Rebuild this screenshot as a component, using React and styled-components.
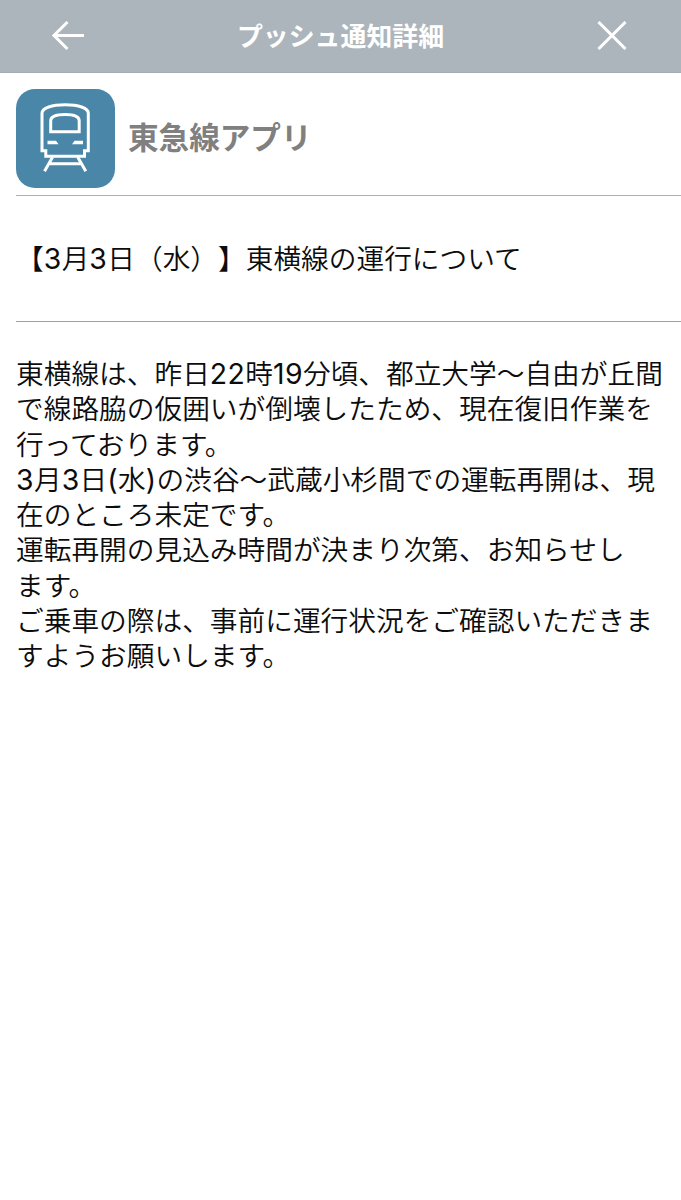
import React from "react";
import styled, { createGlobalStyle } from "styled-components";

const GlobalStyle = createGlobalStyle`
  * {
    box-sizing: border-box;
  }

  body {
    margin: 0;
    background: #fff;
    color: #0c0c0c;
    font-family: Inter, "Noto Sans CJK JP", sans-serif;
    text-spacing-trim: space-all;
    overflow-x: hidden;
  }
`;

const Page = styled.div`
  min-height: 1200px;
  background: #fff;
`;

const Header = styled.header`
  display: grid;
  grid-template-columns: 136px 1fr 138px;
  align-items: center;
  height: 73px;
  background: #adb5bc;
  border-bottom: 1px solid #a5acb2;
`;

const Title = styled.h1`
  margin: 0;
  padding: 2px 0 0 2px;
  color: #fff;
  font-size: 25.9px;
  font-weight: 600;
  line-height: 40px;
  text-align: center;
  white-space: nowrap;
`;

const IconButton = styled.button`
  display: flex;
  justify-content: center;
  padding: 0;
  border: 0;
  background: none;

  & svg {
    display: block;
    fill: none;
    stroke: #fff;
    stroke-width: 3;
  }
`;

const Main = styled.main`
  padding-left: 16px;
`;

const Sender = styled.section`
  display: flex;
  align-items: center;
  gap: 13px;
  height: 123px;
  padding-top: 8px;
  border-bottom: 1px solid #b0b0b0;
`;

const AppIcon = styled.svg`
  display: block;
  width: 99px;
  height: 99px;
  border-radius: 19px;
  background: #4a86a8;
  fill: none;
  stroke: #fff;
  stroke-width: 3;
`;

const AppName = styled.h2`
  margin: 0;
  color: #808080;
  font-size: 30.6px;
  font-weight: 600;
  line-height: 44px;
`;

const Subject = styled.p`
  height: 126px;
  margin: 0;
  padding-top: 43px;
  border-bottom: 1px solid #a0a0a0;
  font-size: 27.7px;
  font-weight: 350;
  line-height: 40px;
  white-space: nowrap;
`;

const Message = styled.div`
  padding-top: 35px;
`;

const Line = styled.p`
  margin: 0;
  font-size: 27.7px;
  font-weight: 350;
  line-height: 35.3px;
  white-space: nowrap;
`;

const Latin = styled.span`
  font-size: 28.4px;
  font-weight: 400;
  letter-spacing: 0.4px;
  line-height: 1;
`;

const subject = "【3月3日（水）】東横線の運行について";

const lines = [
  "東横線は、昨日22時19分頃、都立大学〜自由が丘間",
  "で線路脇の仮囲いが倒壊したため、現在復旧作業を",
  "行っております。",
  "3月3日(水)の渋谷〜武蔵小杉間での運転再開は、現",
  "在のところ未定です。",
  "運転再開の見込み時間が決まり次第、お知らせし",
  "ます。",
  "ご乗車の際は、事前に運行状況をご確認いただきま",
  "すようお願いします。",
];

// digits and half-width brackets are set a little larger than the kanji
function MixedText({ text }) {
  return text
    .split(/([0-9()]+)/)
    .map((part, i) => (i % 2 ? <Latin key={i}>{part}</Latin> : part));
}

function BackIcon() {
  return (
    <svg width="34" height="30" viewBox="0 0 34 30">
      <path d="M16.5 1L3 14.5L16.5 28M2 14.5H33" />
    </svg>
  );
}

function CloseIcon() {
  return (
    <svg width="30" height="30" viewBox="0 0 30 30">
      <path d="M1.5 1L28.5 28M28.5 1L1.5 28" />
    </svg>
  );
}

function TrainIcon() {
  return (
    <AppIcon viewBox="0 0.7 99 99">
      <path d="M26 62.5V25C26 19.5 36 16.5 49.2 16.5S72.3 19.5 72.3 25V62.5H68.5V68H29.8V62.5Z" />
      <path d="M34.7 43.5V32.5C34.7 28.5 40.5 26.3 49.2 26.3S63.2 28.5 63.2 32.5V43.5Z" />
      <path d="M36.5 69L28.5 83M61.8 69L69.8 83M34 75.5H64.5" />
      <path
        fill="#fff"
        stroke="none"
        d="M31.5 52.5H40L42.5 56H31.5ZM67 52.5H58.5L56 56H67Z"
      />
    </AppIcon>
  );
}

export default function App() {
  return (
    <Page>
      <GlobalStyle />
      <Header>
        <IconButton aria-label="戻る">
          <BackIcon />
        </IconButton>
        <Title>プッシュ通知詳細</Title>
        <IconButton aria-label="閉じる">
          <CloseIcon />
        </IconButton>
      </Header>
      <Main>
        <Sender>
          <TrainIcon />
          <AppName>東急線アプリ</AppName>
        </Sender>
        <Subject>
          <MixedText text={subject} />
        </Subject>
        <Message>
          {lines.map((line) => (
            <Line key={line}>
              <MixedText text={line} />
            </Line>
          ))}
        </Message>
      </Main>
    </Page>
  );
}
